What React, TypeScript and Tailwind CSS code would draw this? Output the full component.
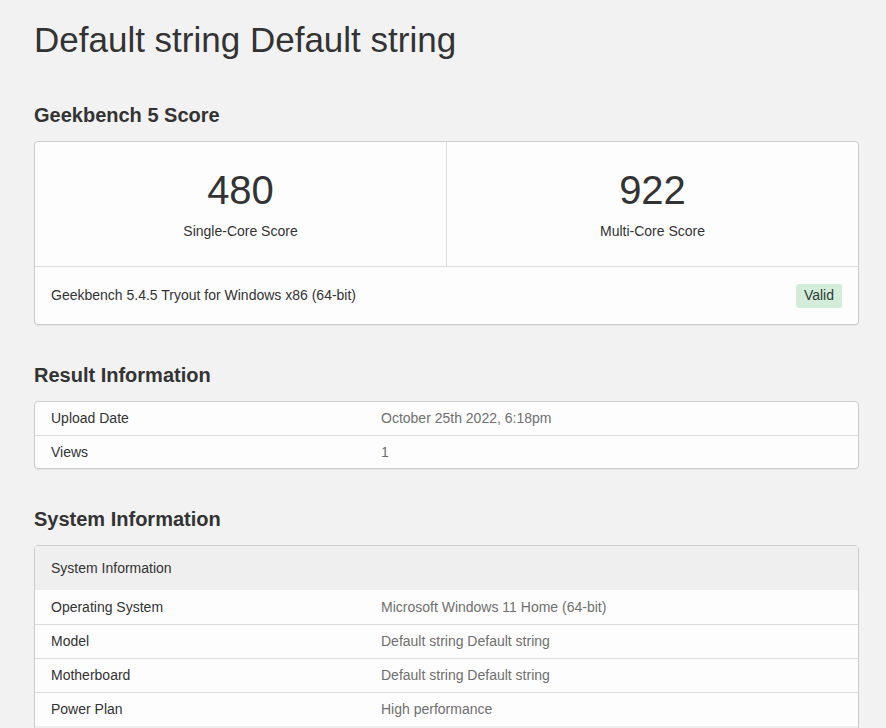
const resultRows = [
  ["Upload Date", "October 25th 2022, 6:18pm"],
  ["Views", "1"],
];

const systemRows = [
  ["Operating System", "Microsoft Windows 11 Home (64-bit)"],
  ["Model", "Default string Default string"],
  ["Motherboard", "Default string Default string"],
  ["Power Plan", "High performance"],
];

function InfoRow({ label, value, tall, first }: { label: string; value: string; tall?: boolean; first?: boolean }) {
  return (
    <div
      className={
        "flex items-center " +
        (tall ? "h-[34px] " : "h-[33px] ") +
        (first ? "" : "border-t border-[#dddddd]")
      }
    >
      <div className="w-[346px] pl-4 text-[#333333]">{label}</div>
      <div className="flex-1 text-[#6f6f6f]">{value}</div>
    </div>
  );
}

export default function App() {
  return (
    <div
      className="min-h-screen bg-[#f2f2f2] text-[14px] text-[#333333]"
      style={{ fontFamily: '"Liberation Sans", Arial, sans-serif' }}
    >
      <div className="ml-[34px] w-[825px] pt-5 pb-10">
        <h1 className="text-[35px] leading-[39px] text-[#333333]">Default string Default string</h1>

        {/* Score */}
        <h2 className="mt-[45px] mb-[15px] text-[20px] font-bold leading-[1.1]">Geekbench 5 Score</h2>
        <div className="rounded border border-[#cccccc] bg-[#fdfdfd] shadow-[0_1px_1px_rgba(0,0,0,0.06)]">
          <div className="flex h-[125px] border-b border-[#dddddd]">
            <div className="flex flex-1 flex-col items-center border-r border-[#dddddd] pt-[26px]">
              <div className="text-[40px] leading-[44px] text-[#333333]">480</div>
              <div className="mt-[9px]">Single-Core Score</div>
            </div>
            <div className="flex flex-1 flex-col items-center pt-[26px]">
              <div className="text-[40px] leading-[44px] text-[#333333]">922</div>
              <div className="mt-[9px]">Multi-Core Score</div>
            </div>
          </div>
          <div className="flex h-[57px] items-center justify-between pl-4 pr-4">
            <span>Geekbench 5.4.5 Tryout for Windows x86 (64-bit)</span>
            <span className="flex h-6 items-center rounded-[3px] bg-[#d4eddb] px-[8px] text-[#2f3b33]">Valid</span>
          </div>
        </div>

        {/* Result info */}
        <h2 className="mt-[39px] mb-[15px] text-[20px] font-bold leading-[1.1]">Result Information</h2>
        <div className="rounded border border-[#cccccc] bg-[#fdfdfd] shadow-[0_1px_1px_rgba(0,0,0,0.06)]">
          {resultRows.map(([l, v], i) => (
            <InfoRow key={l} label={l} value={v} first={i === 0} />
          ))}
        </div>

        {/* System info */}
        <h2 className="mt-[39px] mb-[15px] text-[20px] font-bold leading-[1.1]">System Information</h2>
        <div className="rounded border border-[#cccccc] bg-[#fdfdfd] shadow-[0_1px_1px_rgba(0,0,0,0.06)]">
          <div className="flex h-[44px] items-center bg-[#efefef] pl-4">System Information</div>
          {systemRows.map(([l, v], i) => (
            <InfoRow key={l} label={l} value={v} tall first={i === 0} />
          ))}
          <div className="flex h-[44px] items-center bg-[#efefef] pl-4">Processor Information</div>
        </div>
      </div>
    </div>
  );
}
